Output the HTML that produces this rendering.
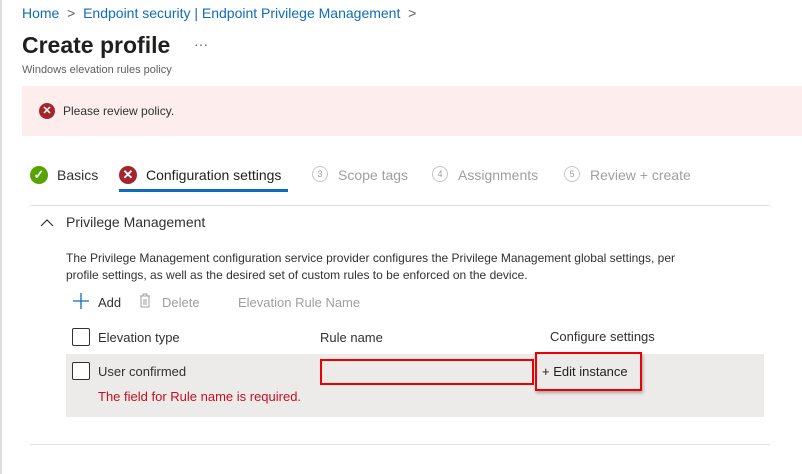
<!DOCTYPE html>
<html><head><style>
body{margin:0;width:802px;height:474px;background:#fff;font-family:"Liberation Sans",sans-serif;position:relative;overflow:hidden;color:#323130}
.a{position:absolute;white-space:nowrap}
.circ{position:absolute;width:18px;height:18px;border-radius:50%;color:#fff;font-size:13px;text-align:center;line-height:18px;font-weight:bold}
.num{position:absolute;width:14px;height:14px;border:1px solid #c8c6c4;border-radius:50%;font-size:9px;text-align:center;line-height:14px;color:#a19f9d}
.cb{position:absolute;width:16px;height:16px;border:1px solid #323130;border-radius:2px;background:#fff}
</style></head><body>
<div class="a" style="left:0;top:0;width:2px;height:474px;background:#e1dfdd"></div>
<div class="a" style="left:22px;top:5px;font-size:14px;color:#0f6cbd">Home <span style="color:#605e5c">&nbsp;&gt;&nbsp;</span> Endpoint security | Endpoint Privilege Management <span style="color:#605e5c">&nbsp;&gt;</span></div>
<div class="a" style="left:22px;top:32px;font-size:23px;font-weight:bold;color:#201f1e">Create profile</div>
<div class="a" style="left:194px;top:36px;font-size:14px;color:#605e5c">···</div>
<div class="a" style="left:22px;top:64px;font-size:11px;color:#605e5c">Windows elevation rules policy</div>
<div class="a" style="left:22px;top:86px;width:780px;height:50px;background:#fdeded"></div>
<div class="circ" style="left:39px;top:103px;width:16px;height:16px;line-height:16px;font-size:11px;background:#a4262c">✕</div>
<div class="a" style="left:63px;top:104px;font-size:12px;color:#323130">Please review policy.</div>
<div class="circ" style="left:30px;top:166px;background:#57a300">✓</div>
<div class="a" style="left:57px;top:167px;font-size:14px">Basics</div>
<div class="circ" style="left:119px;top:166px;background:#a4262c">✕</div>
<div class="a" style="left:146px;top:167px;font-size:14px;color:#201f1e">Configuration settings</div>
<div class="a" style="left:119px;top:189px;width:169px;height:3px;background:#0f6cbd"></div>
<div class="num" style="left:312px;top:166px">3</div>
<div class="a" style="left:338px;top:167px;font-size:14px;color:#a19f9d">Scope tags</div>
<div class="num" style="left:432px;top:166px">4</div>
<div class="a" style="left:458px;top:167px;font-size:14px;color:#a19f9d">Assignments</div>
<div class="num" style="left:564px;top:166px">5</div>
<div class="a" style="left:590px;top:167px;font-size:14px;color:#a19f9d">Review + create</div>
<div class="a" style="left:30px;top:205px;width:740px;height:1px;background:#e1dfdd"></div>
<svg class="a" style="left:40px;top:218px" width="14" height="10"><path d="M1 8 L7 2 L13 8" stroke="#323130" fill="none" stroke-width="1.2"/></svg>
<div class="a" style="left:66px;top:214px;font-size:14px">Privilege Management</div>
<div class="a" style="left:66px;top:250px;font-size:12px;line-height:17px;white-space:normal;width:640px">The Privilege Management configuration service provider configures the Privilege Management global settings, per profile settings, as well as the desired set of custom rules to be enforced on the device.</div>
<svg class="a" style="left:73px;top:293px" width="16" height="16"><path d="M8 0v16M0 8h16" stroke="#0f6cbd" stroke-width="1.3"/></svg>
<div class="a" style="left:98px;top:295px;font-size:13px">Add</div>
<svg class="a" style="left:139px;top:293px" width="12" height="15"><path d="M1 3h10M4 3V1h4v2M2 3v11h8V3M5 6v6M7 6v6" stroke="#a19f9d" fill="none"/></svg>
<div class="a" style="left:162px;top:295px;font-size:13px;color:#a19f9d">Delete</div>
<div class="a" style="left:238px;top:295px;font-size:13px;color:#a19f9d">Elevation Rule Name</div>
<div class="cb" style="left:72px;top:328px"></div>
<div class="a" style="left:98px;top:330px;font-size:13px">Elevation type</div>
<div class="a" style="left:320px;top:330px;font-size:13px">Rule name</div>
<div class="a" style="left:550px;top:329px;font-size:13px">Configure settings</div>
<div class="a" style="left:66px;top:354px;width:698px;height:63px;background:#edebe9"></div>
<div class="cb" style="left:72px;top:362px"></div>
<div class="a" style="left:98px;top:364px;font-size:13px">User confirmed</div>
<div class="a" style="left:98px;top:389px;font-size:13px;color:#c50f1f">The field for Rule name is required.</div>
<div class="a" style="left:320px;top:359px;width:210px;height:22px;border:2px solid #e00;background:#edebe9"></div>
<div class="a" style="left:535px;top:352px;width:103px;height:35px;border:2px solid #e00;box-shadow:1px 2px 3px rgba(0,0,0,.3)"></div>
<div class="a" style="left:542px;top:364px;font-size:13px;color:#201f1e">+ Edit instance</div>
<div class="a" style="left:30px;top:444px;width:740px;height:1px;background:#e1dfdd"></div>
</body></html>
